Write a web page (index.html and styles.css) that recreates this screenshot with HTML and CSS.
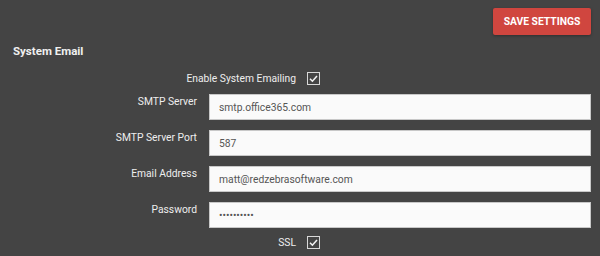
FILE: index.html
```html
<!DOCTYPE html>
<html lang="en">
<head>
    <meta charset="UTF-8">
    <meta name="viewport" content="width=device-width, initial-scale=1.0">
    <title>Settings - System Email</title>
    <link rel="stylesheet" href="styles.css">
</head>
<body>
    <div class="toolbar">
        <button class="save-button">Save Settings</button>
    </div>
    <div class="section">
        <h3>System Email</h3>
        <div class="check-row">
            <label>Enable System Emailing</label>
            <span class="checkbox">
                <svg width="11" height="11" viewBox="0 0 11 11"><path d="M2 5.8 L4.4 8.2 L9 3" fill="none" stroke="#f2f2f2" stroke-width="1.6"/></svg>
            </span>
        </div>
        <div class="field-row">
            <label>SMTP Server</label>
            <input type="text" value="smtp.office365.com">
        </div>
        <div class="field-row">
            <label>SMTP Server Port</label>
            <input type="text" value="587">
        </div>
        <div class="field-row">
            <label>Email Address</label>
            <input type="text" value="matt@redzebrasoftware.com">
        </div>
        <div class="field-row">
            <label>Password</label>
            <input type="password" value="passwordxx">
        </div>
        <div class="check-row">
            <label>SSL</label>
            <span class="checkbox">
                <svg width="11" height="11" viewBox="0 0 11 11"><path d="M2 5.8 L4.4 8.2 L9 3" fill="none" stroke="#f2f2f2" stroke-width="1.6"/></svg>
            </span>
        </div>
    </div>
</body>
</html>
```

FILE: styles.css
```css
body {
    font-family: Roboto, 'Liberation Sans', sans-serif;
    margin: 0;
    padding: 8px 9px 0 13px;
    background-color: #444444;
    color: #eeeeee;
}
.toolbar {
    display: flex;
    justify-content: flex-end;
}
.save-button {
    height: 27px;
    width: 98px;
    padding: 0;
    background-color: #d0463f;
    color: #ffffff;
    border: none;
    border-radius: 2px;
    font-family: Roboto, sans-serif;
    font-size: 10.3px;
    font-weight: 700;
    text-transform: uppercase;
    box-shadow: 0 1px 3px rgba(0, 0, 0, 0.3);
    cursor: pointer;
}
.section h3 {
    margin: 9px 0 0;
    font-size: 11.5px;
    line-height: 14px;
    font-weight: 700;
    color: #f0f0f0;
}
.check-row {
    display: flex;
    align-items: center;
    gap: 11px;
    height: 13px;
    margin-top: 14px;
}
.check-row label {
    width: 283px;
    text-align: right;
    font-size: 10.3px;
}
.checkbox {
    width: 11px;
    height: 11px;
    border: 1px solid #d8d8d8;
    display: flex;
    align-items: center;
    justify-content: center;
}
.field-row {
    display: flex;
    gap: 12px;
    margin-top: 10px;
}
.check-row + .field-row {
    margin-top: 9px;
}
.field-row + .check-row {
    margin-top: 8px;
}
.field-row label {
    width: 184px;
    flex-shrink: 0;
    text-align: right;
    font-size: 10.3px;
    line-height: 13px;
    padding-top: 1px;
}
.field-row input {
    flex: 1;
    height: 26px;
    box-sizing: border-box;
    padding: 0 9px;
    border: 1px solid #c8c8c8;
    background-color: #fafafa;
    color: #555555;
    font-family: Roboto, sans-serif;
    font-size: 10.3px;
}
```
